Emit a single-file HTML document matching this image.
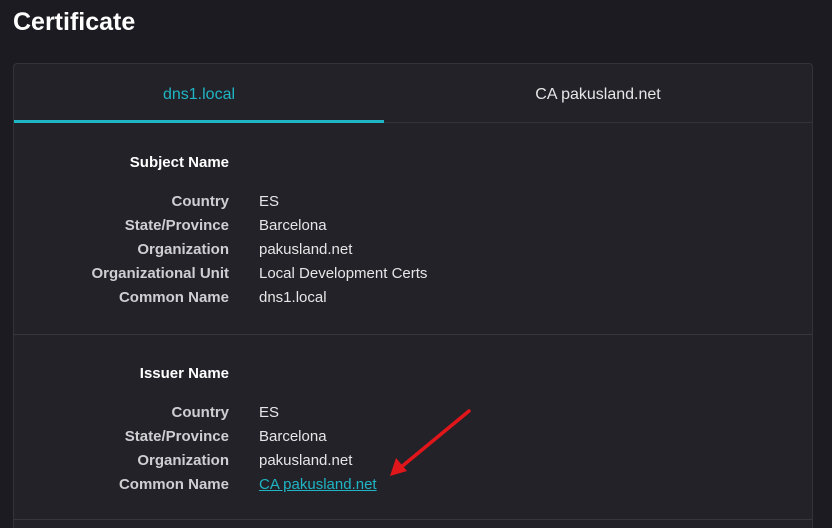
<!DOCTYPE html>
<html style="height:528px;overflow:hidden"><head><style>
body{margin:0;background:#1c1b21;font-family:"Liberation Sans",sans-serif;color:#e6e6e6;width:832px;height:528px;overflow:hidden;position:relative}
h1{position:absolute;left:13px;top:8px;margin:0;font-size:25px;font-weight:bold;color:#fff}
.card{position:absolute;left:13px;top:63px;width:798px;height:470px;background:#232229;border:1px solid #34333a;border-radius:4px}
.tab{position:absolute;top:0;height:56px;line-height:62px;text-align:center;font-size:16px}
.t1{left:0;width:370px;color:#1fb5c4;border-bottom:3px solid #1fb5c4}
.t2{left:370px;width:428px;color:#e6e6e6;border-bottom:1px solid #34333a;height:58px}
.row{position:absolute;font-size:15px;white-space:nowrap}
.l{right:583px;text-align:right;font-weight:bold;color:#cfcfd2}
.v{left:245px}
.h{font-weight:bold;color:#fff;right:583px}
.div{position:absolute;left:0;width:798px;height:1px;background:#38373e}
a{color:#1fb5c4;text-decoration:underline}
</style></head><body>
<h1>Certificate</h1>
<div class="card">
<div class="tab t1">dns1.local</div>
<div class="tab t2">CA pakusland.net</div>
<div class="row h" style="top:90px">Subject Name</div>
<div class="row l" style="top:129px">Country</div><div class="row v" style="top:129px">ES</div>
<div class="row l" style="top:153px">State/Province</div><div class="row v" style="top:153px">Barcelona</div>
<div class="row l" style="top:177px">Organization</div><div class="row v" style="top:177px">pakusland.net</div>
<div class="row l" style="top:201px">Organizational Unit</div><div class="row v" style="top:201px">Local Development Certs</div>
<div class="row l" style="top:225px">Common Name</div><div class="row v" style="top:225px">dns1.local</div>
<div class="div" style="top:270px"></div>
<div class="row h" style="top:301px">Issuer Name</div>
<div class="row l" style="top:340px">Country</div><div class="row v" style="top:340px">ES</div>
<div class="row l" style="top:364px">State/Province</div><div class="row v" style="top:364px">Barcelona</div>
<div class="row l" style="top:388px">Organization</div><div class="row v" style="top:388px">pakusland.net</div>
<div class="row l" style="top:412px">Common Name</div><div class="row v" style="top:412px"><a>CA pakusland.net</a></div>
<div class="div" style="top:455px"></div>
</div>
<svg style="position:absolute;left:0;top:0" width="832" height="528">
<line x1="469" y1="411" x2="400" y2="468" stroke="#e0161a" stroke-width="3.5" stroke-linecap="round"/>
<polygon points="390,476 396,458 407,471" fill="#e0161a"/>
</svg>
</body></html>
